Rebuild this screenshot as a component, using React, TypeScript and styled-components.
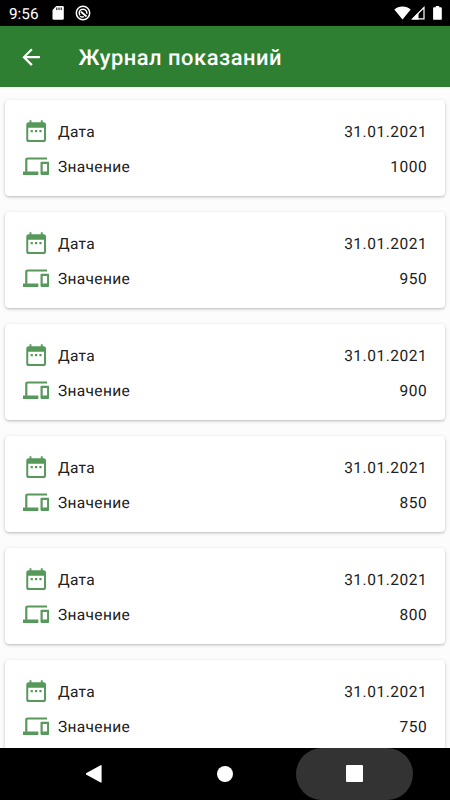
import React from 'react';
import styled, { createGlobalStyle } from 'styled-components';

const GlobalStyle = createGlobalStyle`
  *, *::before, *::after { box-sizing: border-box; }
  html, body { margin: 0; padding: 0; }
  body {
    background: #000;
    font-family: Roboto, sans-serif;
    text-rendering: geometricPrecision;
    overflow: hidden;
  }
  svg { display: block; flex: none; }
`;

const Screen = styled.div`
  width: 450px;
  height: 800px;
  display: flex;
  flex-direction: column;
  overflow: hidden;
  background: #fcfcfc;
`;

const StatusBar = styled.div`
  height: 26px;
  flex: none;
  display: flex;
  align-items: center;
  justify-content: space-between;
  padding: 0 8px 0 9px;
  background: #000;
  color: #fff;
`;

const StatusLeft = styled.div`
  display: flex;
  align-items: center;
`;

const Clock = styled.span`
  width: 43px;
  font-size: 15.3px;
  line-height: 18px;
  padding-top: 1px;
`;

const StatusGlyphs = styled.div<{ $gap: number }>`
  display: flex;
  align-items: center;
  gap: ${({ $gap }) => $gap}px;
`;

const AppBar = styled.header`
  height: 61.3px;
  flex: none;
  display: flex;
  align-items: center;
  padding-left: 17.5px;
  background: #2f7f33;
  color: #fff;
`;

const BackButton = styled.button`
  width: 61px;
  padding: 0;
  border: 0;
  background: none;
  color: inherit;
`;

const Title = styled.h1`
  margin: 0;
  padding-top: 4px;
  font-size: 21.9px;
  line-height: 28px;
  font-weight: 500;
  letter-spacing: 0.52px;
  white-space: nowrap;
`;

const List = styled.main`
  flex: 1;
  min-height: 0;
  overflow: hidden;
  display: flex;
  flex-direction: column;
  gap: 15.6px;
  padding: 12.4px 5.4px 0;
`;

const Card = styled.article`
  height: 96.4px;
  flex: none;
  padding: 13.6px 17.4px 0 17.6px;
  border-radius: 4px;
  background: #fff;
  box-shadow:
    0 1px 2px rgba(0, 0, 0, 0.16),
    0 1px 4px rgba(0, 0, 0, 0.13);
`;

const Row = styled.div`
  height: 35px;
  display: flex;
  align-items: center;
  gap: 8.7px;
  color: #212121;
  font-size: 15.5px;
  line-height: 20px;
  letter-spacing: 0.52px;
`;

const Label = styled.span`
  flex: 1;
  padding-top: 2px;
  letter-spacing: 0.35px;
`;

const Value = styled.span`
  padding-top: 2px;
  white-space: nowrap;
`;

const NavBar = styled.nav`
  height: 52.5px;
  flex: none;
  display: flex;
  align-items: center;
  justify-content: center;
  gap: 12.2px;
  background: #000;
`;

const NavButton = styled.button<{ $pressed?: boolean }>`
  width: 117.5px;
  height: 52.5px;
  padding: 0;
  border: 0;
  border-radius: 26.25px;
  display: flex;
  align-items: center;
  justify-content: center;
  background: ${({ $pressed }) => ($pressed ? '#333' : 'transparent')};
`;

const CalendarIcon = () => (
  <svg width="26.25" height="26.25" viewBox="0 0 24 24" fill="#57985b">
    <path d="M9 11H7v2h2v-2zm4 0h-2v2h2v-2zm4 0h-2v2h2v-2zM19 3.800h-1V2h-1.700v1.800H7.700V2H6v1.800H5c-1.110 0-2 .9-2 2V20c0 1.100.89 2 2 2h14c1.100 0 2-.9 2-2V5.800c0-1.100-.9-2-2-2zm.2 15.700a.7.7 0 0 1-.7.700H5.500a.7.7 0 0 1-.7-.7V8.800h14.400v10.700z" />
  </svg>
);

const DevicesIcon = () => (
  <svg width="26.25" height="26.25" viewBox="0 0 24 24" fill="#57985b">
    <path d="M4 6h18V4H4c-1.1 0-2 .9-2 2v11H0v3h14v-3H4V6zm19 2h-6c-.55 0-1 .45-1 1v10c0 .55.45 1 1 1h6c.55 0 1-.45 1-1V9c0-.55-.45-1-1-1zm-1 9h-4v-7h4v7z" />
  </svg>
);

const ArrowIcon = () => (
  <svg width="26.25" height="26.25" viewBox="0 0 24 24" fill="#fff">
    <path d="M20 11H7.83l5.59-5.59L12 4l-8 8 8 8 1.41-1.41L7.83 13H20v-2z" />
  </svg>
);

const SdCardIcon = () => (
  <svg width="12" height="14" viewBox="0 0 12 14">
    <path fill="#fff" d="M4.3 0H10.500a1.300 1.300 0 0 1 1.300 1.300V12.500a1.300 1.300 0 0 1-1.300 1.300H1.800A1.300 1.300 0 0 1 .5 12.500V4z" />
    <path stroke="#000" strokeWidth="1" d="M4.800 1.500v2.600M7 1.500v2.600M9.200 1.500v2.600" />
  </svg>
);

const DebugIcon = () => (
  <svg width="16" height="16" viewBox="0 0 16 16" fill="none" stroke="#fff">
    <circle cx="8" cy="8" r="6.700" strokeWidth="1.500" />
    <path strokeWidth="1.500" d="M4.800 10.300C3.200 7.200 4.900 4.200 8 4.200c2.600 0 4.300 2.300 3.700 4.600" />
    <path strokeWidth="1.900" d="M6 6.800l5.500 4.600" />
    <path strokeWidth="1.300" d="M5 11.200c1.500 1 2.700 1 4 .4" />
  </svg>
);

const WifiIcon = () => (
  <svg width="17" height="14" viewBox="0 0 17 14" fill="#fff">
    <path d="M8.500 13.500L.3 3.400C2.500 1.400 5.300.4 8.500.4s6 1 8.200 3z" />
  </svg>
);

const SignalIcon = () => (
  <svg width="14" height="14" viewBox="0 0 14 14">
    <path fill="none" stroke="#fff" strokeWidth="1.200" d="M1.600 12.900L13 1.500v11.400z" />
    <path fill="#fff" d="M.6 13.500L7.500 6.300v7.200z" />
  </svg>
);

const BatteryIcon = () => (
  <svg width="9" height="14" viewBox="0 0 9 14" fill="#fff">
    <path d="M2.800 0h3.400v1.300h1.700a.9.9 0 0 1 .9.900v10.700a.9.9 0 0 1-.9.900H1a.9.9 0 0 1-.9-.9V2.200a.9.9 0 0 1 .9-.9h1.800z" />
  </svg>
);

const readings = [
  { date: '31.01.2021', value: 1000 },
  { date: '31.01.2021', value: 950 },
  { date: '31.01.2021', value: 900 },
  { date: '31.01.2021', value: 850 },
  { date: '31.01.2021', value: 800 },
  { date: '31.01.2021', value: 750 },
];

export default function App() {
  return (
    <>
      <GlobalStyle />
      <Screen>
        <StatusBar>
          <StatusLeft>
            <Clock>9:56</Clock>
            <StatusGlyphs $gap={11}>
              <SdCardIcon />
              <DebugIcon />
            </StatusGlyphs>
          </StatusLeft>
          <StatusGlyphs $gap={8}>
            <StatusGlyphs $gap={0}>
              <WifiIcon />
              <SignalIcon />
            </StatusGlyphs>
            <BatteryIcon />
          </StatusGlyphs>
        </StatusBar>
        <AppBar>
          <BackButton>
            <ArrowIcon />
          </BackButton>
          <Title>Журнал показаний</Title>
        </AppBar>
        <List>
          {readings.map(({ date, value }) => (
            <Card key={value}>
              <Row>
                <CalendarIcon />
                <Label>Дата</Label>
                <Value>{date}</Value>
              </Row>
              <Row>
                <DevicesIcon />
                <Label>Значение</Label>
                <Value>{value}</Value>
              </Row>
            </Card>
          ))}
        </List>
        <NavBar>
          <NavButton>
            <svg width="18" height="20" viewBox="0.800 0 18 20" fill="#fff">
              <path d="M15.400 1.200L.8 9.300a.6.6 0 0 0 0 1.100l14.600 8.100a.7.7 0 0 0 1-.6V1.800a.7.7 0 0 0-1-.6z" />
            </svg>
          </NavButton>
          <NavButton>
            <svg width="16" height="16" viewBox="0 0 16 16" fill="#fff">
              <circle cx="8" cy="8" r="8" />
            </svg>
          </NavButton>
          <NavButton $pressed>
            <svg width="17" height="17" viewBox="0 0 17 17" fill="#fff">
              <rect width="17" height="17" rx="1" />
            </svg>
          </NavButton>
        </NavBar>
      </Screen>
    </>
  );
}
